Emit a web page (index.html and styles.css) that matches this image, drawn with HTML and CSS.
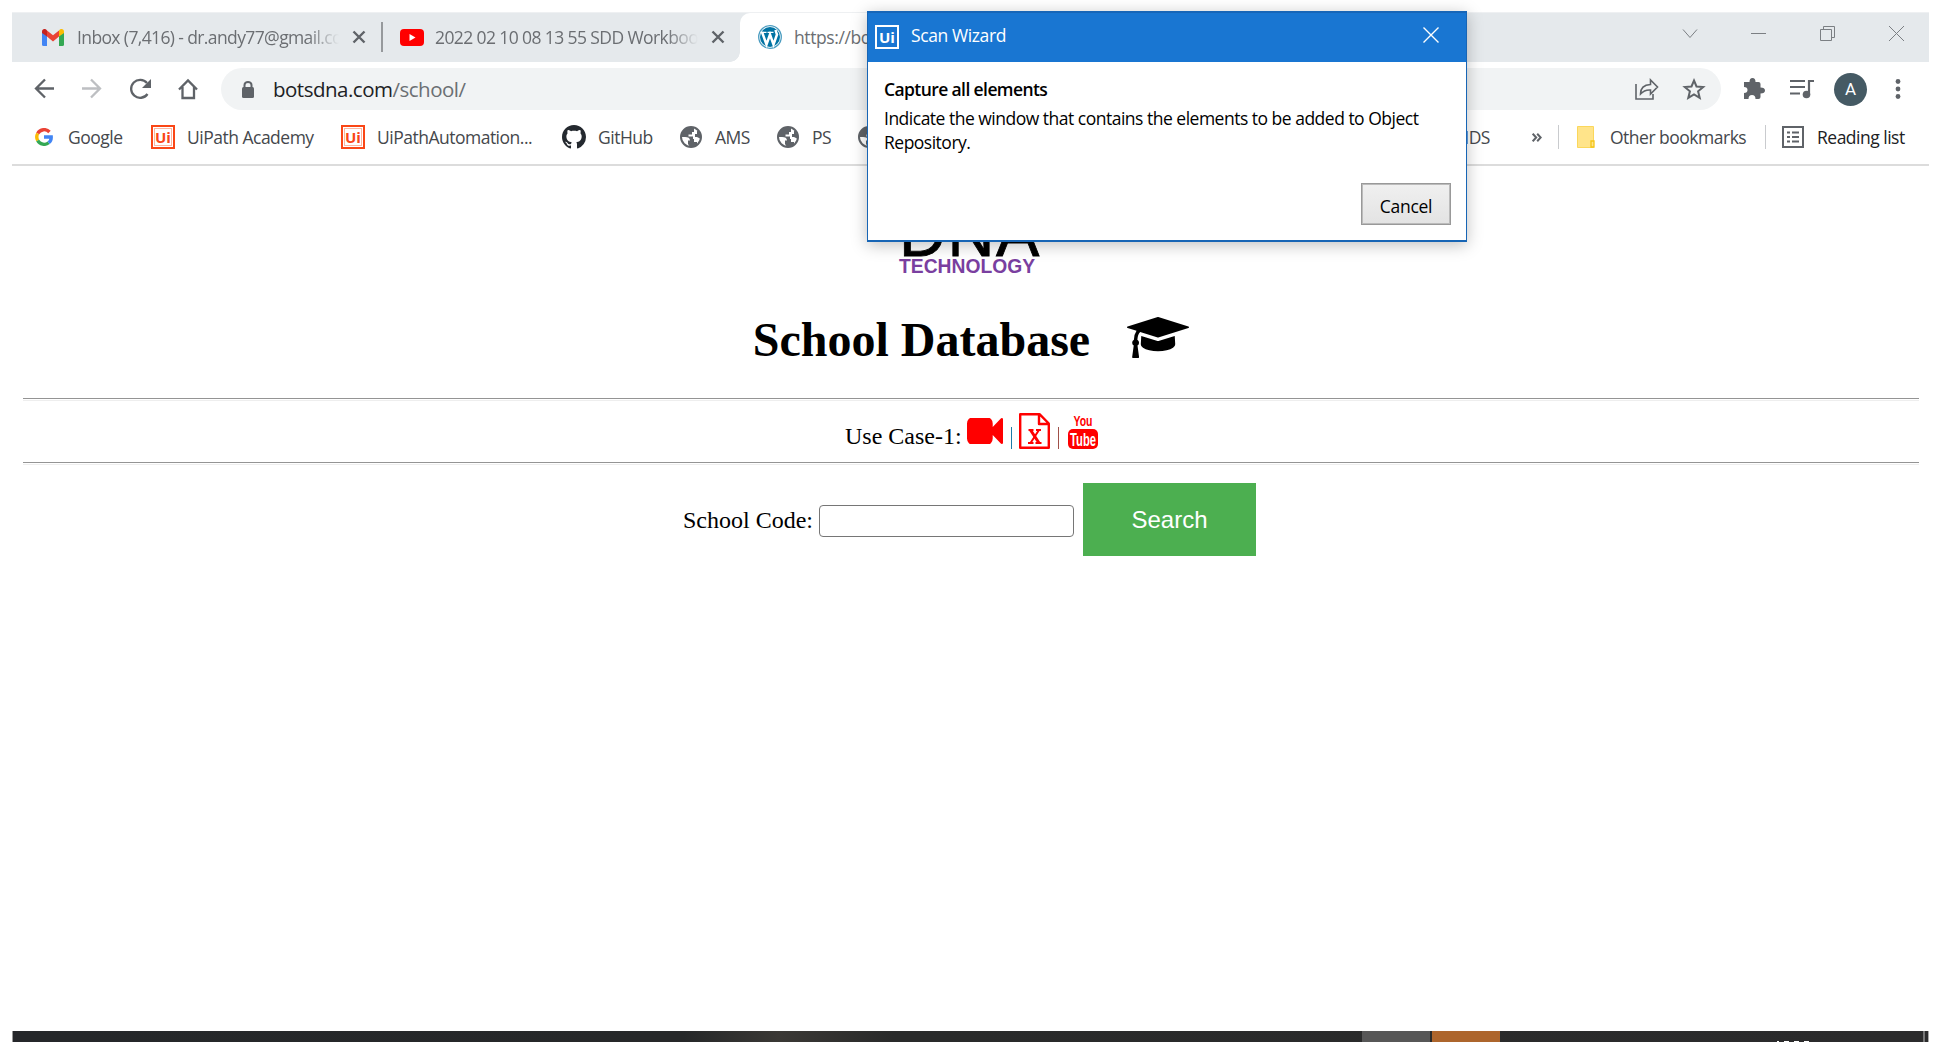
FILE: index.html
```html
<!DOCTYPE html>
<html lang="en">
<head>
<meta charset="utf-8">
<title>School Database</title>
<link rel="stylesheet" href="styles.css">
</head>
<body>
<svg class="defs" width="0" height="0">
  <symbol id="globe" viewBox="0 0 22 22"><circle cx="11" cy="11" r="10" fill="#fff" stroke="#5f6368" stroke-width="2"/><path fill="#5f6368" d="M11 1C5 1 1 5.500 1 11h4c3 0 5 1 5 3.500H8V18l2 3h1c2 0 4-1 6-2.500V16h-3v-3h-1V10.500H8.500V8.500H12V6h2V2zM17 4.500V8h-2v3h2l4 2c0-4-1-6.500-4-8.500z"/></symbol>
  <symbol id="close" viewBox="0 0 14 14"><path d="M1.500 1.500l11 11M12.500 1.500l-11 11" stroke="#5f6368" stroke-width="2.400"/></symbol>
</svg>
<div class="browser">
  <div class="tabs">
    <div class="tab tab-mail">
      <svg class="gmail" width="22" height="17" viewBox="0 0 22 17"><path fill="#4285f4" d="M0 3l5 4v10H1.500Q0 17 0 15.500z"/><path fill="#34a853" d="M22 3l-5 4v10h3.500q1.500 0 1.500-1.500z"/><path fill="#ea4335" d="M5 1.500l6 4.700 6-4.700V7.500l-6 5-6-5z"/><path fill="#c5221f" d="M0 2.500C0 0 3-1 5 1.500v6L0 4z"/><path fill="#fbbc04" d="M22 2.500C22 0 19-1 17 1.500v6L22 4z"/></svg>
      <span class="tab-title t-mail">Inbox (7,416) - dr.andy77@gmail.com</span>
      <svg class="x" width="14" height="14"><use href="#close"/></svg>
    </div>
    <div class="tab tab-video">
      <svg width="24" height="17" viewBox="0 0 24 17"><rect width="24" height="17" rx="4" fill="#f00"/><path d="M9.500 5l6 3.500-6 3.500z" fill="#fff"/></svg>
      <span class="tab-title t-video">2022 02 10 08 13 55 SDD Workbook</span>
      <svg class="x" width="14" height="14"><use href="#close"/></svg>
    </div>
    <div class="tab tab-active">
      <svg width="24" height="24" viewBox="0 0 24 24"><circle cx="12" cy="12" r="11.300" fill="#fff" stroke="#4a9cc0" stroke-width="1.300"/><circle cx="12" cy="12" r="10" fill="#0073a3"/><path fill="none" stroke="#fff" stroke-width="2.500" d="M4 7l4.500 12.500L12 9.500l3.500 10L19 9.500Q18 7 17.500 5"/><path stroke="#fff" stroke-width="1.200" d="M2.500 7.300h6M9.500 7.300h6"/></svg>
      <span class="t-active">https://botsdna.com</span>
    </div>
    <svg class="winctl" width="230" height="50" viewBox="1680 12 230 50" fill="none" stroke="#7b7f83" stroke-width="1"><path d="M1683 28.500l7 8 7-8M1751 32.500h15M1820.500 28.500h11v11h-11zM1823.500 28v-2.500h11v11h-2.500M1889 25l15 15M1904 25l-15 15"/></svg>
  </div>
  <div class="toolbar">
    <svg class="nav" width="170" height="24" viewBox="32 77 170 24" fill="none" stroke="#5f6368" stroke-width="2.300"><path d="M54 88.500H36M45 79.500l-9 9 9 9"/><path stroke="#bdbfc2" d="M82 88.500h18M91 79.500l9 9-9 9"/><path d="M147.500 94a9 9 0 1 1-.500-11"/><path d="M151 79v9h-9z" fill="#5f6368" stroke="none"/><path d="M179 89.500l9-9 9 9M182.500 87v11h11.500V87"/></svg>
    <div class="omnibox">
      <svg class="lock" width="12" height="17" viewBox="0 0 12 17"><rect y="6" width="12" height="11" rx="1.500" fill="#5f6368"/><path d="M2.500 7V4a3.500 3 0 0 1 7 0v3" fill="none" stroke="#5f6368" stroke-width="2"/></svg>
      <span class="url">botsdna.com<span class="path">/school/</span></span>
      <svg class="omni-icons" width="72" height="24" viewBox="1634 77 72 24" fill="none" stroke="#5f6368" stroke-width="1.600"><path d="M1636 84v15h17v-5M1640.500 94q0-9 10-9.500V80l7 7-7 7v-4q-6-.500-10 4z"/><path stroke-width="2" d="M1694 80.500l2.500 6 6.700.500-5.100 4.300 1.600 6.500-5.700-3.500-5.700 3.500 1.600-6.500-5.100-4.300 6.700-.500z"/></svg>
    </div>
    <svg class="ext" width="74" height="24" viewBox="1742 77 74 24"><path fill="#5f6368" d="M1744 82h5.500q0-4 3-4t3 4h3q2 0 2 2v3.500q4.500 0 4.500 3t-4.500 3V97q0 2-2 2h-3q0-4-3.500-4t-3.500 4h-4.500v-6q3.500 0 3.500-3t-3.500-3z"/><path stroke="#5f6368" stroke-width="2.200" fill="none" d="M1790 81h15M1790 87h15M1790 93.500h10M1809 95V81h5"/><circle cx="1806.500" cy="94.500" r="3.800" fill="#5f6368"/></svg>
    <div class="avatar">A</div>
    <svg class="dots" width="6" height="20" viewBox="0 0 6 20" fill="#5f6368"><circle cx="3" cy="2.500" r="2.400"/><circle cx="3" cy="10" r="2.400"/><circle cx="3" cy="17.500" r="2.400"/></svg>
  </div>
  <div class="bookmarks">
    <div class="bm bm-google"><svg width="18" height="18" viewBox="0 0 18 18" fill="none" stroke-width="3.400"><path stroke="#ea4335" d="M14.500 4A7.300 7.300 0 0 0 2.700 5.500"/><path stroke="#fbbc05" d="M2.700 5.500a7.300 7.300 0 0 0 0 7"/><path stroke="#34a853" d="M2.700 12.500a7.300 7.300 0 0 0 11 2.200"/><path stroke="#4285f4" d="M13.700 14.700A7 7 0 0 0 16.200 9H9"/></svg><span>Google</span></div>
    <div class="bm bm-academy"><b class="ui">Ui</b><span>UiPath Academy</span></div>
    <div class="bm bm-auto"><b class="ui">Ui</b><span>UiPathAutomation...</span></div>
    <div class="bm bm-github"><svg width="24" height="24" viewBox="0 0 16 16"><path fill="#24292f" d="M8 0C3.580 0 0 3.580 0 8c0 3.540 2.290 6.530 5.470 7.590.4.070.55-.17.55-.38 0-.19-.01-.82-.01-1.490-2.010.37-2.530-.49-2.690-.94-.09-.23-.48-.94-.82-1.130-.28-.15-.68-.52-.01-.53.63-.01 1.080.58 1.230.82.72 1.210 1.870.87 2.330.66.07-.52.28-.87.51-1.070-1.780-.2-3.640-.89-3.640-3.950 0-.87.31-1.590.82-2.150-.08-.2-.36-1.020.08-2.120 0 0 .67-.21 2.200.82.64-.18 1.320-.27 2-.27s1.360.09 2 .27c1.530-1.040 2.200-.82 2.200-.82.44 1.100.16 1.920.08 2.120.51.56.82 1.270.82 2.150 0 3.070-1.870 3.750-3.650 3.950.29.25.54.73.54 1.480 0 1.070-.01 1.930-.01 2.200 0 .21.15.46.55.38A8.010 8.010 0 0 0 16 8c0-4.420-3.580-8-8-8z"/></svg><span>GitHub</span></div>
    <div class="bm bm-ams"><svg width="22" height="22"><use href="#globe"/></svg><span>AMS</span></div>
    <div class="bm bm-ps"><svg width="22" height="22"><use href="#globe"/></svg><span>PS</span></div>
    <div class="bm bm-more"><svg width="22" height="22"><use href="#globe"/></svg></div>
    <div class="bm bm-nds"><span>NDS</span></div>
    <div class="bm bm-chev"><svg width="10" height="9" viewBox="0 0 10 9" fill="none" stroke="#5f6368" stroke-width="2"><path d="M.7.700l3.500 3.800L.7 8.300M5.200.700l3.500 3.800-3.500 3.800"/></svg></div>
    <div class="bm bm-other"><svg width="18" height="22" viewBox="0 0 18 22"><path fill="#ffe48a" stroke="#fbd75b" d="M.5.500h16v21H.5z"/><path fill="#ffe48a" stroke="#f5c518" stroke-width="1.300" d="M14 21v-6h3v6z"/></svg><span>Other bookmarks</span></div>
    <div class="bm bm-list"><svg width="22" height="22" viewBox="0 0 22 22"><path fill="none" stroke="#5f6368" stroke-width="2" d="M1 1h20v20H1zM5 6.500h3M10 6.500h7M5 11h3M10 11h7M5 15.500h3M10 15.500h7"/></svg><span>Reading list</span></div>
  </div>
  <main class="page">
    <div class="logo"><div class="dna">DNA</div><div class="tech">TECHNOLOGY</div></div>
    <h1><span>School Database</span><svg width="62" height="41" viewBox="0 128 2304 1536" preserveAspectRatio="none"><path d="M1774 836l18 316q4 69-82 128t-235 93.500-323 34.500-323-34.500-235-93.500-82-128l18-316 574 181q22 7 48 7t48-7zm530-324q0 23-22 31l-1120 352q-4 1-10 1t-10-1l-652-206q-43 34-71 111.500t-34 178.500q63 36 63 109 0 69-58 107l58 433q2 14-8 25-9 11-24 11h-192q-15 0-24-11-10-11-8-25l58-433q-58-38-58-107 0-73 65-111 11-207 98-330l-333-104q-22-8-22-31t22-31l1120-352q4-1 10-1t10 1l1120 352q22 8 22 31z"/></svg></h1>
    <hr>
    <div class="usecase">
      <span class="uc-label">Use Case-1:</span>
      <svg class="cam" width="36" height="26" viewBox="0 288 1792 1216" preserveAspectRatio="none"><path fill="#f00" d="M1792 352v1088q0 42-39 59-13 5-25 5-27 0-45-19l-403-403v166q0 119-84.500 203.500t-203.500 84.500h-704q-119 0-203.500-84.500t-84.500-203.500v-704q0-119 84.500-203.500t203.500-84.500h704q119 0 203.500 84.500t84.500 203.500v165l403-402q18-19 45-19 12 0 25 5 39 17 39 59z"/></svg>
      <i class="bar bar-blue"></i>
      <svg class="xls" width="31" height="36" viewBox="0 0 31 36" fill="none" stroke="#f00" stroke-width="2.400"><path stroke-linejoin="round" d="M1.200 1.200h19.300l9.300 9.300v24.300H1.200zM20 1.200V11h9.800"/><path stroke-width="3" d="M11.500 17l8.500 13"/><path stroke-width="2" d="M20 17l-8.500 13M9.500 17h5M17 17h5M9 30h5.500M16.500 30h6"/></svg>
      <i class="bar bar-red"></i>
      <svg class="yt" width="30" height="36" viewBox="0 0 30 36"><rect y="16" width="30" height="20" rx="5" fill="#f00"/><text x="5.500" y="13.300" textLength="19" lengthAdjust="spacingAndGlyphs" fill="#f00">You</text><text class="tube" x="2" y="32.800" textLength="26" lengthAdjust="spacingAndGlyphs" fill="#fff">Tube</text></svg>
    </div>
    <hr>
    <form class="search"><label for="code">School Code:</label><input id="code" type="text"><button type="button">Search</button></form>
  </main>
  <div class="taskbar"><i class="tb-grey"></i><i class="tb-orange"></i><span class="clock"><i></i><i></i><i></i><i></i></span><i class="tb-edge"></i></div>
</div>
<div class="dialog">
  <div class="dlg-head"><b class="ui ui-white">Ui</b><span>Scan Wizard</span><svg width="16" height="16" viewBox="0 0 16 16" stroke="#fff" stroke-width="1.400"><path d="M.5.500l15 15M15.500.500l-15 15"/></svg></div>
  <div class="dlg-body">
    <div class="dlg-title">Capture all elements</div>
    <div class="dlg-text"><span class="l1">Indicate the window that contains the elements to be added to Object</span><br><span class="l2">Repository.</span></div>
    <button class="cancel" type="button">Cancel</button>
  </div>
</div>
</body>
</html>
```
FILE: styles.css
```css
* { box-sizing: border-box; }
body { margin: 0; background: #fff; width: 1942px; height: 1042px; overflow: hidden; position: relative; font-family: "Open Sans", "Noto Sans", sans-serif; }
.defs { position: absolute; }
svg { display: block; flex: none; }
.browser { margin: 12px 13px 0 12px; height: 1030px; display: flex; flex-direction: column; white-space: nowrap; }
.tabs { height: 50px; flex: none; background: #e5e9ec; border-top: 1px solid #eef0f2; display: flex; font-size: 17.5px; color: #6b6e72; }
.tab { display: flex; align-items: center; padding-bottom: 1px; overflow: hidden; }
.tab-mail { width: 371px; padding-left: 30px; position: relative; }
.tab-mail::after { content: ""; margin-left: 15px; width: 2px; height: 30px; background: #96999c; }
.tab-video { width: 357px; padding-left: 17px; }
.tab-title { overflow: hidden; -webkit-mask-image: linear-gradient(90deg, #000 88%, transparent); mask-image: linear-gradient(90deg, #000 88%, transparent); }
.t-mail { width: 263px; margin: 0 13px 0 13px; letter-spacing: -0.62px; }
.t-video { width: 263px; margin: 0 13px 0 11px; letter-spacing: -0.6px; }
.tab-active { width: 330px; background: #fff; border-radius: 10px 0 0 0; padding-left: 18px; position: relative; overflow: visible; }
.tab-active::before { content: ""; position: absolute; left: -10px; bottom: 0; width: 10px; height: 10px; background: radial-gradient(circle at 0 0, transparent 9.5px, #fff 10px); }
.t-active { margin-left: 12px; letter-spacing: -0.4px; }
.winctl { margin-left: 610px; }
.toolbar { height: 54px; flex: none; display: flex; align-items: center; }
.nav { margin-left: 20px; }
.omnibox { margin-left: 19px; width: 1500px; height: 42px; border-radius: 21px; background: #f1f3f4; display: flex; align-items: center; }
.lock { margin-left: 21px; }
.url { margin-left: 19px; width: 220px; font-size: 20.5px; letter-spacing: -0.5px; color: #202124; }
.path { color: #6b6f73; }
.omni-icons { margin-left: auto; margin-right: 15px; }
.ext { margin-left: 21px; }
.avatar { margin-left: 18px; width: 33px; height: 33px; border-radius: 50%; background: #455a64; color: #fff; font: 17px/33px Roboto, sans-serif; text-align: center; }
.dots { margin-left: 28px; }
.bookmarks { height: 50px; flex: none; display: flex; border-bottom: 2px solid #dcdcdc; font-size: 17.5px; color: #45484c; padding-bottom: 6px; }
.bm { display: flex; align-items: center; gap: 12px; letter-spacing: -0.5px; flex: none; }
.bm-google { width: 116px; margin-left: 23px; gap: 15px; }
.bm-academy { width: 190px; }
.bm-auto { width: 221px; }
.bm-github { width: 118px; }
.bm-ams { width: 97px; gap: 13px; }
.bm-ps { width: 81px; gap: 13px; }
.bm-more { width: 598px; }
.bm-nds { width: 76px; }
.bm-chev { width: 26px; }
.bm-other { width: 207px; gap: 15px; }
.bm-other::before, .bm-list::before { content: ""; width: 1px; height: 24px; background: #c9cbce; }
.bm-other::before { margin-right: 3px; }
.bm-list { color: #202124; gap: 13px; }
.bm-list::before { margin-right: 3px; }
.ui { width: 24px; height: 24px; flex: none; border: 2px solid #fa4616; box-shadow: inset 0 0 0 1px #fff, inset 0 0 0 2px #fbb7a3; color: #fa4616; font: bold 15px/20px "Open Sans", sans-serif; letter-spacing: 0; text-align: center; }
.page { flex: 1; padding: 0 10px 0 11px; font-family: "Liberation Serif", serif; font-size: 24px; color: #000; overflow: hidden; }
.logo { margin: 38px auto 0; width: 144px; height: 72px; font-family: "Liberation Sans", sans-serif; }
.dna { height: 54px; font-size: 65px; line-height: 60px; letter-spacing: 1.5px; -webkit-text-stroke: 0.8px #000; }
.tech { font-size: 19.3px; line-height: 18px; font-weight: bold; color: #7a3fa0; letter-spacing: 0; }
h1 { margin: 36px 0 0; height: 56px; display: flex; justify-content: center; font-size: 48px; line-height: 56px; }
h1 svg { margin: 5px 0 0 37px; }
hr { margin: 30px 0 0; height: 3px; border: 0; border-top: 1px solid #949494; border-bottom: 1px solid #eee; }
.usecase { height: 61px; display: flex; padding: 12px 0 0 822px; }
.uc-label { width: 122px; line-height: 28px; margin-top: 9px; }
.cam { margin-top: 5px; }
.bar { width: 1px; height: 22px; margin-top: 14px; }
.bar-blue { background: #1c7aa8; margin-left: 8px; }
.bar-red { background: #a05048; margin-left: 8px; }
.xls { margin-left: 7px; }
.yt { margin-left: 9px; }
.yt text { font: bold 15px "Liberation Sans", sans-serif; }
.yt .tube { font-size: 18px; }
.usecase + hr { margin-top: 0; }
.search { display: flex; margin: 18px 0 0 660px; height: 73px; }
.search label { width: 136px; line-height: 28px; margin-top: 23px; }
.search input { width: 255px; height: 32px; margin-top: 22px; border: 1px solid #767676; border-radius: 4px; }
.search button { width: 173px; height: 73px; margin-left: 9px; border: 0; background: #4caf50; color: #fff; font: 24px "Liberation Sans", sans-serif; }
.taskbar { height: 11px; flex: none; width: 1917px; background: linear-gradient(90deg, #25272a, #262829 35%, #3a3835 40%, #292a2a 46%, #2b2b2c); border-left: 1px solid #999; border-right: 1px solid #aaa; display: flex; }
.tb-grey { width: 68px; margin-left: 1349px; background: #575757; }
.tb-orange { width: 68px; margin-left: 2px; background: #ad652c; }
.clock { display: flex; gap: 5px; margin-left: 277px; align-self: flex-end; width: 40px; }
.clock i { width: 5px; height: 1px; background: #fff; }
.clock i:first-child { width: 2px; }
.tb-edge { width: 2px; margin-left: 106px; background: #777; }
.dialog { position: absolute; left: 867px; top: 11px; width: 600px; height: 231px; background: #fff; border: 1px solid #1765b5; border-top: 2px solid #1766b8; border-bottom-width: 2px; box-shadow: 0 3px 15px rgba(0,0,0,.25); color: #000; white-space: nowrap; }
.dlg-head { height: 49px; background: #1976d2; color: #fff; display: flex; align-items: center; padding: 0 27px 5px 7px; font-size: 17.5px; letter-spacing: -0.4px; }
.ui-white { border-color: #fff; color: #fff; box-shadow: inset 0 0 0 1px #1976d2; margin-top: 3px; }
.dlg-head span { margin-left: 12px; }
.dlg-head svg { margin-left: auto; }
.dlg-body { display: flex; flex-direction: column; padding: 15px 15px 0 16px; font-size: 17.5px; line-height: 24px; }
.dlg-title { font-weight: 600; letter-spacing: -0.6px; margin-bottom: 5px; }
.dlg-text { letter-spacing: -0.5px; }
.cancel { align-self: flex-end; margin-top: 29px; width: 90px; height: 42px; font: 17.5px "Open Sans", sans-serif; letter-spacing: -0.3px; color: #000; border: 1px solid #999; box-shadow: inset 0 0 0 1px #bbb; background: linear-gradient(#f0f0f0, #e3e3e3); padding: 3px 0 0; }
```
